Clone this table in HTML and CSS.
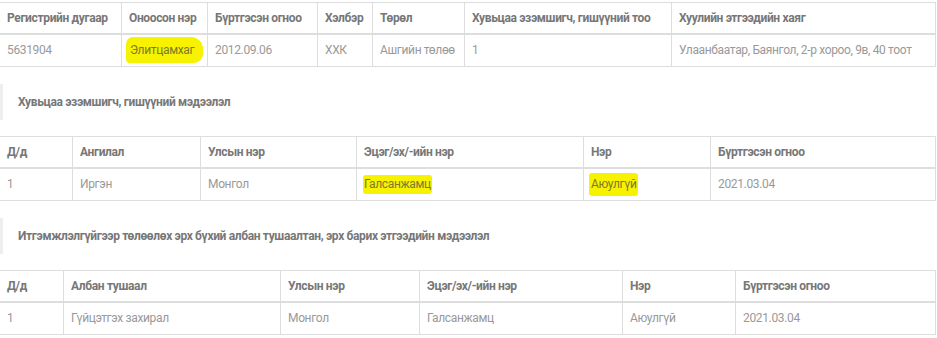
FILE: index.html
```html
<!DOCTYPE html>
<html lang="mn">
<head>
<meta charset="utf-8">
<title>Company info</title>
<link rel="stylesheet" href="styles.css">
</head>
<body>
<div class="page">
  <table class="grid t1">
    <colgroup>
      <col class="c1"><col class="c2"><col class="c3"><col class="c4"><col class="c5"><col class="c6"><col class="c7">
    </colgroup>
    <thead>
      <tr>
        <th>Регистрийн дугаар</th>
        <th>Оноосон нэр</th>
        <th>Бүртгэсэн огноо</th>
        <th>Хэлбэр</th>
        <th>Төрөл</th>
        <th>Хувьцаа эзэмшигч, гишүүний тоо</th>
        <th>Хуулийн этгээдийн хаяг</th>
      </tr>
    </thead>
    <tbody>
      <tr>
        <td>5631904</td>
        <td><span class="mark mark-a">Элитцамхаг</span></td>
        <td>2012.09.06</td>
        <td>ХХК</td>
        <td>Ашгийн төлөө</td>
        <td>1</td>
        <td>Улаанбаатар, Баянгол, 2-р хороо, 9в, 40 тоот</td>
      </tr>
    </tbody>
  </table>

  <h4 class="section">Хувьцаа эзэмшигч, гишүүний мэдээлэл</h4>

  <table class="grid t2">
    <colgroup>
      <col class="c1"><col class="c2"><col class="c3"><col class="c4"><col class="c5"><col class="c6">
    </colgroup>
    <thead>
      <tr>
        <th>Д/д</th>
        <th>Ангилал</th>
        <th>Улсын нэр</th>
        <th>Эцэг/эх/-ийн нэр</th>
        <th>Нэр</th>
        <th>Бүртгэсэн огноо</th>
      </tr>
    </thead>
    <tbody>
      <tr>
        <td>1</td>
        <td>Иргэн</td>
        <td>Монгол</td>
        <td><span class="mark mark-b">Галсанжамц</span></td>
        <td><span class="mark mark-c">Аюулгүй</span></td>
        <td>2021.03.04</td>
      </tr>
    </tbody>
  </table>

  <h4 class="section">Итгэмжлэлгүйгээр төлөөлөх эрх бүхий албан тушаалтан, эрх барих этгээдийн мэдээлэл</h4>

  <table class="grid t3">
    <colgroup>
      <col class="c1"><col class="c2"><col class="c3"><col class="c4"><col class="c5"><col class="c6">
    </colgroup>
    <thead>
      <tr>
        <th>Д/д</th>
        <th>Албан тушаал</th>
        <th>Улсын нэр</th>
        <th>Эцэг/эх/-ийн нэр</th>
        <th>Нэр</th>
        <th>Бүртгэсэн огноо</th>
      </tr>
    </thead>
    <tbody>
      <tr>
        <td>1</td>
        <td>Гүйцэтгэх захирал</td>
        <td>Монгол</td>
        <td>Галсанжамц</td>
        <td>Аюулгүй</td>
        <td>2021.03.04</td>
      </tr>
    </tbody>
  </table>
</div>
</body>
</html>
```
FILE: styles.css
```css
html, body {
  margin: 0;
  padding: 0;
  background: #fff;
}

.page {
  font-family: "Roboto", "Liberation Sans", sans-serif;
  font-size: 12px;
  letter-spacing: -0.35px;
  color: #999;
  padding-top: 2px;
  margin-left: -1px;
  width: 936px;
}

.grid {
  width: 936px;
  border-collapse: collapse;
  table-layout: fixed;
}

.grid th,
.grid td {
  border: 1px solid #ddd;
  text-align: left;
  line-height: 16px;
  white-space: nowrap;
  overflow: visible;
}

.grid th {
  font-weight: bold;
  color: #777;
  padding: 7px 6px 7px 7px;
  border-bottom: 2px solid #ddd;
}

.grid td {
  padding: 7px 6px 8px 7px;
}

.t1 .c1 { width: 122px; }
.t1 .c2 { width: 86px; }
.t1 .c3 { width: 110px; }
.t1 .c4 { width: 55px; }
.t1 .c5 { width: 92px; }
.t1 .c6 { width: 207px; }
.t1 .c7 { width: 264px; }

.t2 .c1 { width: 73px; }
.t2 .c2 { width: 128px; }
.t2 .c3 { width: 156px; }
.t2 .c4 { width: 227px; }
.t2 .c5 { width: 127px; }
.t2 .c6 { width: 225px; }

.t3 .c1 { width: 64px; }
.t3 .c2 { width: 217px; }
.t3 .c3 { width: 139px; }
.t3 .c4 { width: 203px; }
.t3 .c5 { width: 113px; }
.t3 .c6 { width: 200px; }

.section {
  margin: 17px 0 16px 1px;
  height: 36px;
  box-sizing: border-box;
  border-left: 3px solid #eee;
  padding: 0 0 0 15px;
  display: flex;
  align-items: center;
  font-size: 12px;
  font-weight: bold;
  color: #777;
}

.mark {
  background: #f7f200;
  color: #7d7a2a;
  border-radius: 3px;
}

.mark-a {
  padding: 6px 9px 6px 4px;
  margin-left: -3px;
  border-radius: 7px 12px 9px 4px;
}

.mark-b {
  padding: 2px 1px 3px 1px;
  margin-left: -1px;
}

.mark-c {
  padding: 4px 2px 5px 2px;
  margin-left: -2px;
}
```
